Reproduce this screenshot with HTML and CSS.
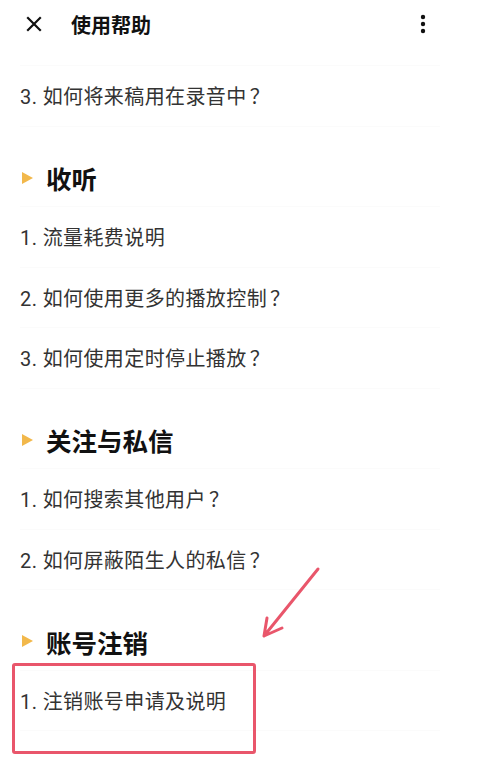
FILE: index.html
```html
<!DOCTYPE html>
<html lang="zh-CN">
<head>
<meta charset="utf-8">
<title>使用帮助</title>
<link rel="stylesheet" href="styles.css">
</head>
<body>
<div class="page">
  <header class="toolbar">
    <svg class="close" width="16" height="16" viewBox="0 0 16 16"><path d="M2 2 L14 14 M14 2 L2 14" stroke="#111" stroke-width="2.2" stroke-linecap="square"/></svg>
    <div class="title">使用帮助</div>
    <svg class="more" width="6" height="20" viewBox="0 0 6 20"><circle cx="3" cy="3" r="2.2" fill="#111"/><circle cx="3" cy="10" r="2.2" fill="#111"/><circle cx="3" cy="17" r="2.2" fill="#111"/></svg>
  </header>
  <main class="list">
    <div class="spacer"></div>
    <div class="row">3. 如何将来稿用在录音中<span class="q">？</span></div>

    <div class="section"><span class="tri"></span>收听</div>
    <div class="row">1. 流量耗费说明</div>
    <div class="row">2. 如何使用更多的播放控制<span class="q">？</span></div>
    <div class="row">3. 如何使用定时停止播放<span class="q">？</span></div>

    <div class="section"><span class="tri"></span>关注与私信</div>
    <div class="row">1. 如何搜索其他用户<span class="q">？</span></div>
    <div class="row">2. 如何屏蔽陌生人的私信<span class="q">？</span></div>

    <div class="section"><span class="tri"></span>账号注销</div>
    <div class="row">1. 注销账号申请及说明</div>
  </main>
  <svg class="annot" width="479" height="766" viewBox="0 0 479 766">
    <rect x="13.5" y="664.5" width="241" height="88" rx="1.5" fill="none" stroke="#e9566b" stroke-width="3"/>
    <path d="M318 569 L264 636 M267 618 L264 636 L282 628" fill="none" stroke="#e9566b" stroke-width="3" stroke-linecap="round" stroke-linejoin="round"/>
  </svg>
</div>
</body>
</html>
```
FILE: styles.css
```css
html, body {
  margin: 0;
  padding: 0;
  background: #fff;
}
body {
  font-family: Roboto, "Noto Sans CJK SC", "Noto Sans", sans-serif;
  color: #333;
  overflow: hidden;
}
.page {
  position: relative;
  width: 479px;
  height: 766px;
  overflow: hidden;
}
.toolbar {
  height: 48px;
  display: flex;
  align-items: center;
  padding-left: 26px;
  padding-right: 53px;
}
.close {
  display: block;
}
.title {
  margin-left: 29px;
  font-size: 20px;
  font-weight: bold;
  color: #111;
  flex: 1;
}
.more {
  display: block;
}
.list {
  padding: 0 39px 0 20px;
}
.spacer {
  height: 17px;
  border-bottom: 1px solid #fbfbfb;
}
.row {
  box-sizing: border-box;
  height: 60.5px;
  display: flex;
  align-items: center;
  font-size: 20px;
  letter-spacing: 0.4px;
  color: #333;
  border-bottom: 1px solid #fbfbfb;
  white-space: nowrap;
}
.q {
  margin-left: 3px;
}
.section {
  box-sizing: border-box;
  margin-top: 20px;
  height: 60.5px;
  display: flex;
  align-items: center;
  font-size: 25.5px;
  font-weight: bold;
  color: #111;
  border-bottom: 1px solid #fbfbfb;
  padding-top: 3px;
}
.tri {
  width: 0;
  height: 0;
  margin-left: 2px;
  margin-right: 13px;
  border-top: 6px solid transparent;
  border-bottom: 6px solid transparent;
  border-left: 11px solid #f2b84b;
}
.annot {
  position: absolute;
  left: 0;
  top: 0;
  pointer-events: none;
}
```
